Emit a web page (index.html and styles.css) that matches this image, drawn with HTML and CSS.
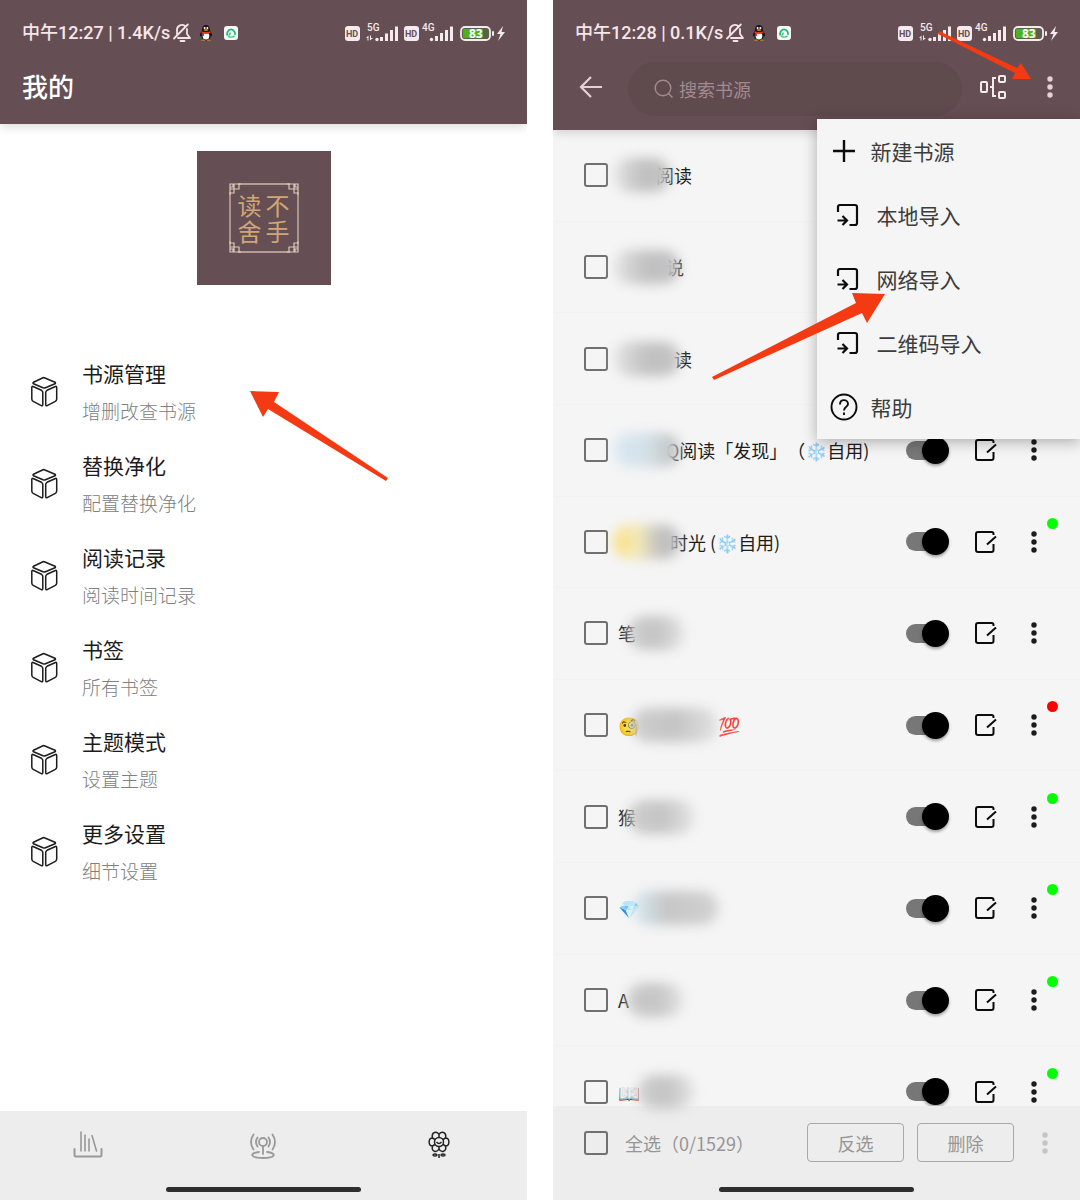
FILE: index.html
```html
<!DOCTYPE html>
<html lang="zh-CN">
<head>
<meta charset="utf-8">
<meta name="viewport" content="width=device-width, initial-scale=1">
<title>我的 · 书源管理</title>
<link rel="stylesheet" href="styles.css">
</head>
<body>
<svg class="defs" aria-hidden="true">
  <symbol id="bell" viewBox="0 0 18 20">
    <g fill="none" stroke="#f3e4e8" stroke-width="1.8" stroke-linecap="round" stroke-linejoin="round">
      <path d="M1 15.500 14.800 1.500M4 11V7.500A5 5 0 0 1 12 3M14 6V11L17 15H5"/><path d="M7.500 18H11.500"/>
    </g>
  </symbol>
  <symbol id="penguin" viewBox="0 0 14 18">
    <path d="M7 1C3.800 1 3 3.600 3 6.200 2 8 .6 10 .9 12c.3.800.9.300 1.300-.3C2.600 15 4 16.500 7 16.500s4.400-1.500 4.800-4.800c.4.600 1 1.100 1.300.3.300-2-1.100-4-2.100-5.800C11 3.600 10.200 1 7 1Z" fill="#1b1718"/>
    <ellipse cx="7" cy="12" rx="3.300" ry="3.600" fill="#fff"/><circle cx="5.600" cy="4" r="1" fill="#fff"/><circle cx="8.400" cy="4" r="1" fill="#fff"/>
    <ellipse cx="7" cy="6" rx="2.400" ry=".8" fill="#f3a51f"/><path d="M2.500 7.200Q7 9.500 11.500 7.200V9Q7 11 2.500 9Z" fill="#e6322a"/><path d="M3.200 9H5V12H3.400Z" fill="#e6322a"/>
    <path d="M2 16.500Q4 14.500 6.500 16.500ZM7.500 16.500Q10 14.500 12 16.500Z" fill="#f3a51f"/>
  </symbol>
  <symbol id="app" viewBox="0 0 14 14">
    <rect width="14" height="14" rx="3" fill="#f8f8f8"/>
    <path d="M3.500 9.500C2.300 7.500 4 3.300 7 3.300S11.700 7 10.800 8.800" fill="none" stroke="#1fb873" stroke-width="1.800"/>
    <path d="M10.500 9.800C8.500 11.400 5.500 11.200 4 10.200M5 9.500 6.500 6.500" fill="none" stroke="#3cc98a" stroke-width="1.600"/>
  </symbol>
  <symbol id="radios" viewBox="0 0 161 26">
    <g fill="#f5eaed">
      <rect x="1" y="6" width="15" height="15" rx="3"/><rect x="60" y="6" width="15" height="15" rx="3"/>
      <circle cx="33" cy="19.500" r="1.700"/><path d="M36 17h3v4h-3zM41 13.500h3V21h-3zM46 10h3v11h-3zM51 6.500h3V21h-3z"/>
      <circle cx="87.500" cy="19.500" r="1.700"/><path d="M91 16h3v5h-3zM96 13h3v8h-3zM101 10h3v11h-3zM106 6.500h3V21h-3z"/>
      <path d="M22 18 24.500 15.500V20.500H23.500V18ZM26 15.500H27V18H29L26 20.500Z"/>
      <rect x="148" y="11" width="2" height="5" rx="1"/>
      <path d="M159 6 153 14H156.500L154 21 161 12H157.500Z"/>
    </g>
    <rect x="117" y="7" width="29" height="13" rx="4" fill="#59604d" stroke="#f5eaed" stroke-width="1.800"/>
    <rect x="119" y="9" width="20" height="9" rx="1" fill="#4cb317"/>
  </symbol>
  <symbol id="cube" viewBox="0 0 28 32">
    <g fill="none" stroke="#1c1c1c" stroke-width="1.500" stroke-linejoin="round">
      <path d="M14.300 1.700 25 6.200Q26 7 25 7.800L15.500 11.800Q14.300 12.300 13 11.800L3.500 7.800Q2.500 7 3.500 6.200L13 1.700Q14 1.300 14.300 1.700Z"/>
      <path d="M3 10.500 11.500 14.300Q12.800 15 12.800 16.500V28.500Q12.800 30.300 11.300 29.600L3.200 25.300Q1.800 24.500 1.800 23V11.500Q1.800 10 3 10.500Z"/>
      <path d="M25.500 10.500 17 14.300Q15.700 15 15.700 16.500V28.500Q15.700 30.300 17.200 29.600L25.300 25.300Q26.700 24.500 26.700 23V11.500Q26.700 10 25.500 10.500Z"/>
    </g>
  </symbol>
  <symbol id="dots" viewBox="0 0 8 24"><g fill="currentColor"><circle cx="4" cy="4" r="2.700"/><circle cx="4" cy="12" r="2.700"/><circle cx="4" cy="20" r="2.700"/></g></symbol>
  <symbol id="edit" viewBox="0 0 24 24">
    <path d="M19.500 5V4Q19.500 2 17.500 2H4Q2 2 2 4V20Q2 22 4 22H17.500Q19.500 22 19.500 20V14M13 14.500 22 6.500" fill="none" stroke="#0c0c0c" stroke-width="2"/>
  </symbol>
  <symbol id="import" viewBox="0 0 24 24">
    <path d="M2 9V4Q2 2 4 2H19Q21 2 21 4V20Q21 22 19 22H13.500M1.500 17.500H10.500M6.500 13 11 17.500 6.500 22" fill="none" stroke="#0c0c0c" stroke-width="2.200"/>
  </symbol>
</svg>

<main class="board">
  <section class="phone home" aria-label="我的">
    <header class="header">
      <div class="status">
        <span>中午12:27 | 1.4K/s</span>
        <svg class="bell"><use href="#bell"/></svg><svg class="penguin"><use href="#penguin"/></svg><svg class="app"><use href="#app"/></svg>
        <svg class="radios" viewBox="0 0 161 26"><use href="#radios"/><text class="radio-text" x="23" y="11">5G</text><text class="radio-text" x="78" y="11">4G</text><text class="hd-text" x="2" y="17">HD</text><text class="hd-text" x="61" y="17">HD</text><text class="battery-text" x="125" y="18">83</text></svg>
      </div>
      <h1 class="title">我的</h1>
    </header>
    <div class="logo">
      <svg viewBox="0 0 134 134" aria-hidden="true">
        <path d="M41 33H93M41 101H93M33 41V93M101 41V93" fill="none" stroke="#cfb8a8" stroke-width="1.300"/>
        <g fill="none" stroke="#dcc8ba" stroke-width="1.200">
          <path id="knot" d="M33 44V38H42V33H37V42H33M44 33H38M33 38V33H36V36H33"/>
          <use href="#knot" transform="matrix(-1 0 0 1 134 0)"/><use href="#knot" transform="matrix(1 0 0 -1 0 134)"/><use href="#knot" transform="rotate(180 67 67)"/>
        </g>
      </svg>
      <div class="logo-text"><span>读</span><span>不</span><span>舍</span><span>手</span></div>
    </div>
    <ul class="settings">
      <li><a href="#"><svg><use href="#cube"/></svg><span><b>书源管理</b><small>增删改查书源</small></span></a></li>
      <li><a href="#"><svg><use href="#cube"/></svg><span><b>替换净化</b><small>配置替换净化</small></span></a></li>
      <li><a href="#"><svg><use href="#cube"/></svg><span><b>阅读记录</b><small>阅读时间记录</small></span></a></li>
      <li><a href="#"><svg><use href="#cube"/></svg><span><b>书签</b><small>所有书签</small></span></a></li>
      <li><a href="#"><svg><use href="#cube"/></svg><span><b>主题模式</b><small>设置主题</small></span></a></li>
      <li><a href="#"><svg><use href="#cube"/></svg><span><b>更多设置</b><small>细节设置</small></span></a></li>
    </ul>
    <footer class="footer">
      <nav class="tabs">
        <a href="#" aria-label="书架"><svg viewBox="0 0 30 30"><g fill="none" stroke="#999" stroke-width="1.600" stroke-linecap="round" stroke-linejoin="round"><path d="M1.500 19V25Q1.500 26.500 3 26.500H27Q28.500 26.500 28.500 25V19" stroke-width="2"/><path d="M8 2V21M12 5V21M16 9V21M19 5.500 23.500 21"/></g></svg></a>
        <a href="#" aria-label="发现"><svg viewBox="0 0 30 30"><g fill="none" stroke="#999" stroke-width="1.800" stroke-linecap="round"><circle cx="15" cy="12" r="4"/><path d="M15 16V24M9.500 7.500Q6.500 12 9.500 16.500M20.500 7.500Q23.500 12 20.500 16.500M5.500 4.500Q.5 12 5.500 19.500M24.500 4.500Q29.500 12 24.500 19.500M11 22C1 23 2 28 15 28S29 23 19 22"/></g></svg></a>
        <a href="#" aria-label="我的" aria-current="page"><svg viewBox="0 0 30 30"><g fill="none" stroke="#222" stroke-width="1.500"><circle cx="15" cy="12" r="4.500"/><path d="M15 4.500C13 .5 7 2 8.500 8C4 8 4 16 8.500 16C7 22 13 23 15 19C17 23 23 22 21.500 16C26 16 26 8 21.500 8C23 2 17 .5 15 4.500ZM8.500 8 11 9.500M8.500 16 11 14.500M21.500 8 19 9.500M21.500 16 19 14.500M15 4.500V7.500M15 19V16.500"/><path d="M12.500 12Q15 15 17.500 12M15 24V28"/><ellipse cx="11" cy="25" rx="2" ry="1"/><ellipse cx="19" cy="25" rx="2" ry="1"/></g></svg></a>
      </nav>
      <div class="homebar"></div>
    </footer>
    <svg class="arrow arrow-manage" viewBox="0 0 140 92"><path d="M1 1 30 2 25 12 139 88 137 91 19 19 14 27Z"/></svg>
  </section>

  <section class="phone sources" aria-label="书源管理">
    <header class="header">
      <div class="status">
        <span>中午12:28 | 0.1K/s</span>
        <svg class="bell"><use href="#bell"/></svg><svg class="penguin"><use href="#penguin"/></svg><svg class="app"><use href="#app"/></svg>
        <svg class="radios" viewBox="0 0 161 26"><use href="#radios"/><text class="radio-text" x="23" y="11">5G</text><text class="radio-text" x="78" y="11">4G</text><text class="hd-text" x="2" y="17">HD</text><text class="hd-text" x="61" y="17">HD</text><text class="battery-text" x="125" y="18">83</text></svg>
      </div>
      <div class="toolbar">
        <button class="back" aria-label="返回"><svg viewBox="0 0 24 24"><path d="M12 2 2 12 12 22M2 12H23" fill="none" stroke="#e6d0d6" stroke-width="2.200"/></svg></button>
        <label class="search">
          <svg viewBox="0 0 20 20"><g fill="none" stroke="#a4898f" stroke-width="1.400"><circle cx="9" cy="9" r="7.800"/><path d="M14.500 14.500 18.500 18.500"/></g></svg>
          <input type="search" placeholder="搜索书源" aria-label="搜索书源">
        </label>
        <button class="action" aria-label="分组"><svg viewBox="0 0 28 26"><g fill="none" stroke="#f5eaed" stroke-width="2"><rect x="2" y="8" width="6" height="10" rx="1"/><rect x="20" y="2" width="6" height="6" rx="1"/><rect x="20" y="18" width="6" height="6" rx="1"/><path d="M17 4H14V22H17M11 13H14"/></g></svg></button>
        <button class="action more" aria-label="更多"><svg><use href="#dots"/></svg></button>
      </div>
    </header>

    <ul class="list">
      <li class="row"><input type="checkbox" class="tick" aria-label="选择书源 1"><span class="name"><i class="smudge w-m"></i>阅读</span></li>
      <li class="row"><input type="checkbox" class="tick" aria-label="选择书源 2"><span class="name"><i class="smudge w-l"></i>说</span></li>
      <li class="row"><input type="checkbox" class="tick" aria-label="选择书源 3"><span class="name"><i class="smudge w-l wide"></i>读</span></li>
      <li class="row"><input type="checkbox" class="tick" aria-label="选择书源 4"><span class="name"><i class="smudge w-l ice"></i>Q阅读「发现」（<em>❄️</em>自用)</span>
        <input type="checkbox" class="switch" checked aria-label="启用"><button class="icon" aria-label="编辑"><svg class="edit"><use href="#edit"/></svg></button><button class="icon" aria-label="更多"><svg class="dots"><use href="#dots"/></svg></button></li>
      <li class="row"><input type="checkbox" class="tick" aria-label="选择书源 5"><span class="name"><i class="smudge w-l sun"></i>时光 (<em>❄️</em>自用)</span>
        <input type="checkbox" class="switch" checked aria-label="启用"><button class="icon" aria-label="编辑"><svg class="edit"><use href="#edit"/></svg></button><button class="icon live" aria-label="更多"><svg class="dots"><use href="#dots"/></svg></button></li>
      <li class="row"><input type="checkbox" class="tick" aria-label="选择书源 6"><span class="name">笔<i class="smudge w-m after"></i></span>
        <input type="checkbox" class="switch" checked aria-label="启用"><button class="icon" aria-label="编辑"><svg class="edit"><use href="#edit"/></svg></button><button class="icon" aria-label="更多"><svg class="dots"><use href="#dots"/></svg></button></li>
      <li class="row"><input type="checkbox" class="tick" aria-label="选择书源 7"><span class="name"><em>🧐</em><i class="smudge w-xl after"></i><em>💯</em></span>
        <input type="checkbox" class="switch" checked aria-label="启用"><button class="icon" aria-label="编辑"><svg class="edit"><use href="#edit"/></svg></button><button class="icon live dead" aria-label="更多"><svg class="dots"><use href="#dots"/></svg></button></li>
      <li class="row"><input type="checkbox" class="tick" aria-label="选择书源 8"><span class="name">猴<i class="smudge w-l after"></i></span>
        <input type="checkbox" class="switch" checked aria-label="启用"><button class="icon" aria-label="编辑"><svg class="edit"><use href="#edit"/></svg></button><button class="icon live" aria-label="更多"><svg class="dots"><use href="#dots"/></svg></button></li>
      <li class="row"><input type="checkbox" class="tick" aria-label="选择书源 9"><span class="name"><em>💎</em><i class="smudge w-xl after gem"></i></span>
        <input type="checkbox" class="switch" checked aria-label="启用"><button class="icon" aria-label="编辑"><svg class="edit"><use href="#edit"/></svg></button><button class="icon live" aria-label="更多"><svg class="dots"><use href="#dots"/></svg></button></li>
      <li class="row"><input type="checkbox" class="tick" aria-label="选择书源 10"><span class="name">A<i class="smudge w-m after short"></i></span>
        <input type="checkbox" class="switch" checked aria-label="启用"><button class="icon" aria-label="编辑"><svg class="edit"><use href="#edit"/></svg></button><button class="icon live" aria-label="更多"><svg class="dots"><use href="#dots"/></svg></button></li>
      <li class="row"><input type="checkbox" class="tick" aria-label="选择书源 11"><span class="name"><em>📖</em><i class="smudge w-m after short"></i></span>
        <input type="checkbox" class="switch" checked aria-label="启用"><button class="icon" aria-label="编辑"><svg class="edit"><use href="#edit"/></svg></button><button class="icon live" aria-label="更多"><svg class="dots"><use href="#dots"/></svg></button></li>
    </ul>

    <footer class="footer">
      <div class="bulk">
        <input type="checkbox" class="tick" id="all"><label for="all">全选（0/1529）</label>
        <button class="outline">反选</button><button class="outline">删除</button>
        <button class="icon faded" aria-label="更多"><svg class="dots"><use href="#dots"/></svg></button>
      </div>
      <div class="homebar"></div>
    </footer>

    <div class="menu" role="menu">
      <button role="menuitem"><svg viewBox="0 0 28 28"><path d="M14 3V25M3 14H25" stroke="#0c0c0c" stroke-width="2.400"/></svg>新建书源</button>
      <button role="menuitem" class="inset"><svg><use href="#import"/></svg>本地导入</button>
      <button role="menuitem" class="inset"><svg><use href="#import"/></svg>网络导入</button>
      <button role="menuitem" class="inset"><svg><use href="#import"/></svg>二维码导入</button>
      <button role="menuitem"><svg viewBox="0 0 28 28"><g fill="none" stroke="#0c0c0c" stroke-width="1.900"><circle cx="14" cy="14" r="12.500"/><path d="M10 11.500C10 5.500 18 6 18 11 18 14 14 13.500 14 17.500M14 19.500V22"/></g></svg>帮助</button>
    </div>
    <svg class="arrow arrow-more" viewBox="0 0 96 50"><path d="M2 1 80 38 84 33 94 49 75 49 78 43 1 4Z"/></svg>
    <svg class="arrow arrow-import" viewBox="0 0 176 90"><path d="M175 3 142 2 146 12 2 86 4 89 152 22 157 32Z"/></svg>
  </section>
</main>
</body>
</html>
```

FILE: styles.css
```css
* { box-sizing: border-box; }

body {
  margin: 0;
  background: #fff;
  color: #1c1c1c;
  font-family: "Noto Sans CJK SC", sans-serif;
  font-size: 18px;
  line-height: 26px;
}

ul { margin: 0; padding: 0; list-style: none; }
a { color: inherit; text-decoration: none; }
button { padding: 0; border: 0; background: none; color: inherit; font: inherit; }
svg { display: block; flex: none; }
.defs { position: absolute; width: 0; height: 0; }

.board {
  display: grid;
  grid-template-columns: 1fr 1fr;
  gap: 26px;
  min-height: 100vh;
}

.phone {
  position: relative;
  display: flex;
  flex-direction: column;
  min-width: 0;
  overflow: hidden;
}
.sources { background: #f5f5f5; }

/* Header */
.header {
  position: relative;
  padding: 20px 0 14px;
  background: #664f54;
  box-shadow: 0 2px 10px rgba(0, 0, 0, .16);
}

.status {
  display: flex;
  align-items: center;
  height: 26px;
  padding: 0 22px;
  color: #f5e6ea;
  font-family: Roboto, "Noto Sans CJK SC", sans-serif;
  font-weight: 500;
  white-space: nowrap;
}
.bell { width: 18px; height: 20px; margin-left: 3px; }
.penguin { width: 14px; height: 18px; margin-left: 8px; }
.app { width: 14px; height: 14px; margin-left: 11px; }
.radios { width: 161px; height: 26px; margin-left: auto; }
.radio-text { fill: #f5eaed; font: 500 10px Roboto, sans-serif; }
.hd-text { fill: #664f54; font: 700 9px Roboto, sans-serif; }
.battery-text { fill: #fff; font: 700 12px "Open Sans", sans-serif; }

.title {
  margin: 16px 22px 0;
  color: #fff;
  font-size: 26px;
  font-weight: 500;
  line-height: 48px;
}

.toolbar {
  display: flex;
  margin-top: 16px;
  padding: 0 2px 0 11px;
}
.toolbar button { display: grid; place-items: center; height: 50px; }
.back { width: 54px; margin-right: 10px; }
.back svg { width: 24px; height: 24px; }
.action { width: 57px; color: #e3d2d6; }
.action svg { width: 28px; height: 26px; }
.toolbar .more svg { width: 8px; height: 24px; }

.search {
  display: flex;
  flex: 1;
  align-items: center;
  gap: 5px;
  min-width: 0;
  height: 54px;
  margin-right: 2px;
  padding: 0 26px;
  border-radius: 27px;
  background: #5f4a4e;
}
.search svg { width: 20px; height: 20px; }
.search input {
  flex: 1;
  min-width: 0;
  padding: 0;
  border: 0;
  outline: 0;
  background: none;
  color: #fff;
  font: inherit;
}
.search input::placeholder { color: #a4898f; opacity: 1; }

/* Home screen */
.logo {
  display: grid;
  place-items: center;
  width: 134px;
  margin: 27px auto 61px;
  background: #664f54;
}
.logo > * { grid-area: 1 / 1; }
.logo svg { width: 134px; height: 134px; }
.logo-text {
  display: grid;
  grid-template-columns: 28px 28px;
  color: #d0a774;
  font-size: 24px;
  line-height: 26px;
  text-align: center;
}

.settings { flex: 1; }
.settings a {
  display: flex;
  align-items: center;
  gap: 24px;
  height: 92px;
  padding-left: 30px;
}
.settings svg { width: 28px; height: 32px; }
.settings b, .settings small { display: block; line-height: 38px; }
.settings b { font-size: 21px; font-weight: 400; }
.settings small { color: #808080; font-size: 19px; font-weight: 300; }

.footer { position: relative; background: #ededed; }
.tabs { display: grid; grid-template-columns: repeat(3, 1fr); height: 68px; }
.tabs a { display: grid; place-items: center; }
.tabs svg { width: 30px; height: 30px; }
.homebar { display: flex; justify-content: center; height: 21px; padding-top: 8px; }
.homebar::before {
  content: "";
  width: 37%;
  height: 5px;
  border-radius: 3px;
  background: #2f2f2f;
}

/* Source list: the last row slides under the footer */
.list {
  display: grid;
  flex: 1;
  grid-auto-rows: minmax(64px, 1fr);
  margin-bottom: -32px;
}
.row {
  display: flex;
  align-items: center;
  padding: 0 22px 0 31px;
  border-bottom: 1px solid #f2f2f2;
}

.tick {
  appearance: none;
  flex: none;
  width: 24px;
  height: 24px;
  margin: 0 10px 0 0;
  border: 2px solid #707070;
  border-radius: 3px;
}
.name {
  display: flex;
  flex: 1;
  align-items: center;
  text-spacing-trim: space-all;
  white-space: nowrap;
}
.name em { width: 22px; font-size: 18px; font-style: normal; }

/* Blurred-out part of a source name */
.smudge {
  z-index: 1;
  height: 34px;
  margin: 0 -14px 0 -4px;
  border-radius: 16px;
  background: linear-gradient(90deg, #e4e4e4, #c0c0c0 50%, #c4c4c4);
  filter: blur(6px);
}
.wide { margin-right: -6px; }
.after { margin: 0 0 0 -8px; background: linear-gradient(90deg, #cfcfcf, #c4c4c4 50%, #e2e2e2); }
.short { margin-left: -2px; }
.w-m { width: 56px; }
.w-l { width: 66px; }
.w-xl { width: 86px; }
.ice { background: linear-gradient(90deg, #d6e8f2, #d5e2e9 45%, #c0c0c0); }
.sun { margin-right: -10px; background: linear-gradient(90deg, #f9dc78, #f4eaba 35%, #c0c0c0 70%); }
.gem { background: linear-gradient(90deg, #d8ecf6, #c6c6c6 40%, #d2d2d2); }

.switch {
  position: relative;
  appearance: none;
  flex: none;
  width: 43px;
  height: 27px;
  margin: 0 13px 0 0;
}
.switch::before, .switch::after { content: ""; position: absolute; }
.switch::before { inset: 4px 8px 4px 0; border-radius: 10px; background: #777; }
.switch::after {
  inset: 0 0 0 16px;
  border-radius: 50%;
  background: #000;
  box-shadow: 0 2px 3px rgba(0, 0, 0, .35);
}

.icon {
  position: relative;
  display: grid;
  flex: none;
  place-items: center;
  width: 48px;
  height: 48px;
}
.edit { width: 24px; height: 24px; }
.dots { width: 8px; height: 24px; }
.live::after {
  content: "";
  position: absolute;
  top: 0;
  right: 0;
  width: 11px;
  height: 11px;
  border-radius: 50%;
  background: #0f0;
}
.dead::after { background: #f00; }
.bulk .faded { color: #c4c4c4; }

.bulk {
  display: flex;
  align-items: center;
  gap: 13px;
  height: 73px;
  padding: 0 17px 0 31px;
  color: #969696;
}
.bulk .tick { margin: 0 4px 0 0; }
.bulk label { flex: 1; white-space: nowrap; }
.outline {
  width: 97px;
  height: 39px;
  border: 1px solid #a8a8a8;
  border-radius: 4px;
}
.bulk .icon { width: 36px; }

/* Overflow menu */
.menu {
  position: absolute;
  top: 119px;
  right: 0;
  width: 50%;
  background: #f5f5f5;
  box-shadow: 0 3px 14px rgba(0, 0, 0, .3);
}
.menu button {
  display: flex;
  align-items: center;
  gap: 13px;
  width: 100%;
  height: 64px;
  padding-left: 13px;
  color: #3c3c3c;
  font-size: 21px;
}
.menu svg { width: 28px; height: 28px; }
.menu .inset { gap: 17px; padding-left: 19px; }
.menu .inset svg { width: 24px; height: 24px; }

/* Pointer arrows drawn over the screens */
.arrow { position: absolute; fill: #f33a12; pointer-events: none; }
.arrow-manage { top: 390px; left: 249px; width: 140px; height: 92px; }
.arrow-more { top: 30px; right: 47px; width: 96px; height: 50px; }
.arrow-import { top: 291px; right: 194px; width: 176px; height: 90px; }
```
